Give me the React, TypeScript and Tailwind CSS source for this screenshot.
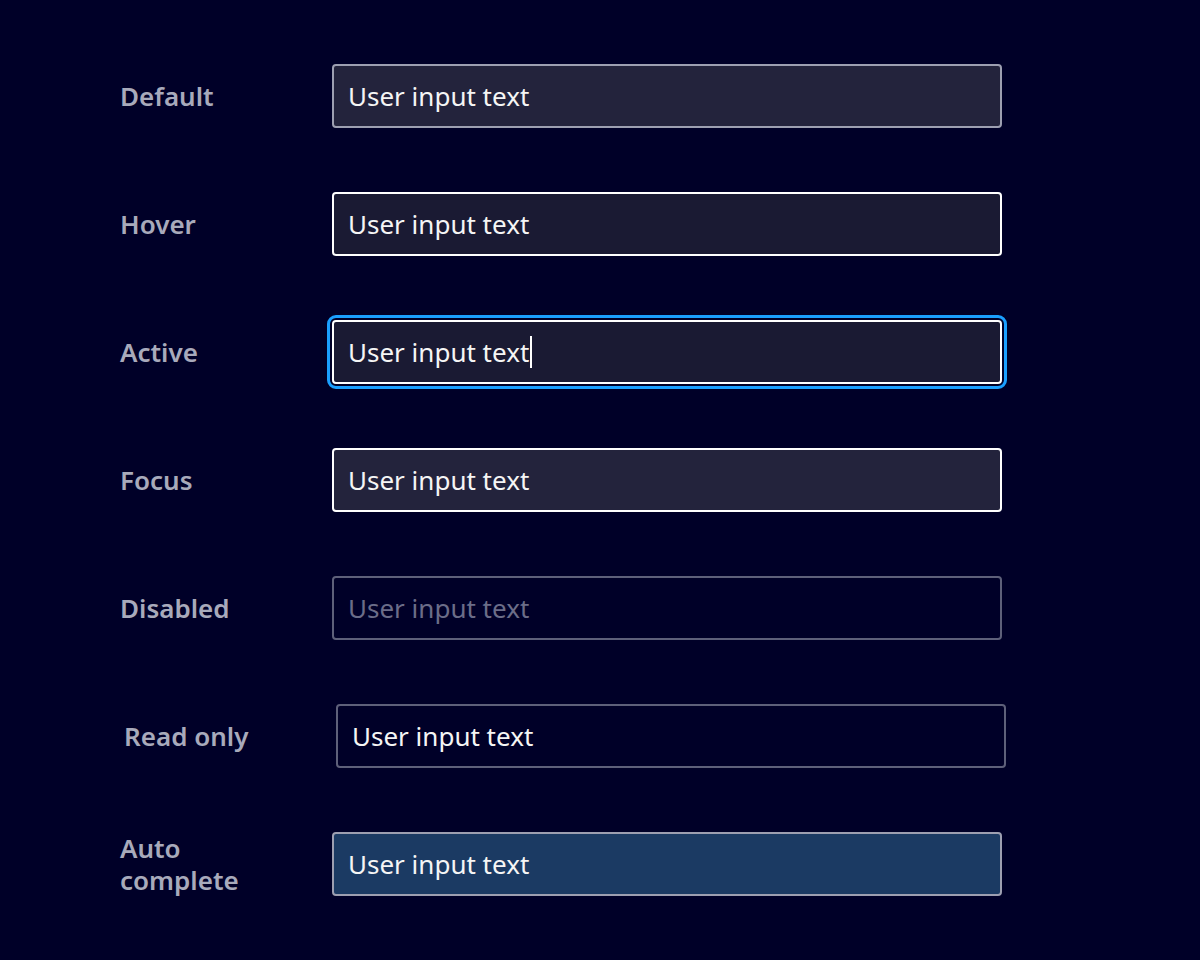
import React from "react";

type Row = {
  label: string;
  box: string;
  text: string;
  shift?: boolean;
  caret?: boolean;
};

const rows: Row[] = [
  { label: "Default", box: "bg-[#23233c] border-[#9d9fb1]", text: "text-[#f5f5f5]" },
  { label: "Hover", box: "bg-[#1a1a33] border-white", text: "text-[#f5f5f5]" },
  {
    label: "Active",
    box: "bg-[#1a1a33] border-white outline-[3px] outline-solid outline-offset-[2px] outline-[#1a9fff]",
    text: "text-[#f5f5f5]",
    caret: true,
  },
  { label: "Focus", box: "bg-[#23233c] border-white", text: "text-[#f5f5f5]" },
  { label: "Disabled", box: "bg-transparent border-[#5e607a]", text: "text-[#6b6d88]" },
  { label: "Read only", box: "bg-transparent border-[#5e607a]", text: "text-[#f5f5f5]", shift: true },
  { label: "Auto complete", box: "bg-[#1b3a63] border-[#9d9fb1]", text: "text-[#f5f5f5]" },
];

export default function App() {
  return (
    <div
      className="w-[1200px] h-[960px] bg-[#000028] pt-[64px] flex flex-col gap-[64px]"
      style={{ fontFamily: '"Noto Sans", "Open Sans", sans-serif' }}
    >
      {rows.map((r) => (
        <div key={r.label} className={`flex items-center h-[64px] ${r.shift ? "pl-[124px]" : "pl-[120px]"}`}>
          <div className="w-[140px] mr-[72px] text-[26px] leading-[32px] font-semibold text-[#a8aabb]">
            {r.label}
          </div>
          <div
            className={`w-[670px] h-[64px] border-2 rounded-[4px] flex items-center pl-[14px] ${r.box}`}
          >
            <span className={`text-[26px] leading-[32px] ${r.text}`}>User input text</span>
            {r.caret && <span className="w-[2px] h-[32px] bg-white ml-[1px]" />}
          </div>
        </div>
      ))}
    </div>
  );
}
